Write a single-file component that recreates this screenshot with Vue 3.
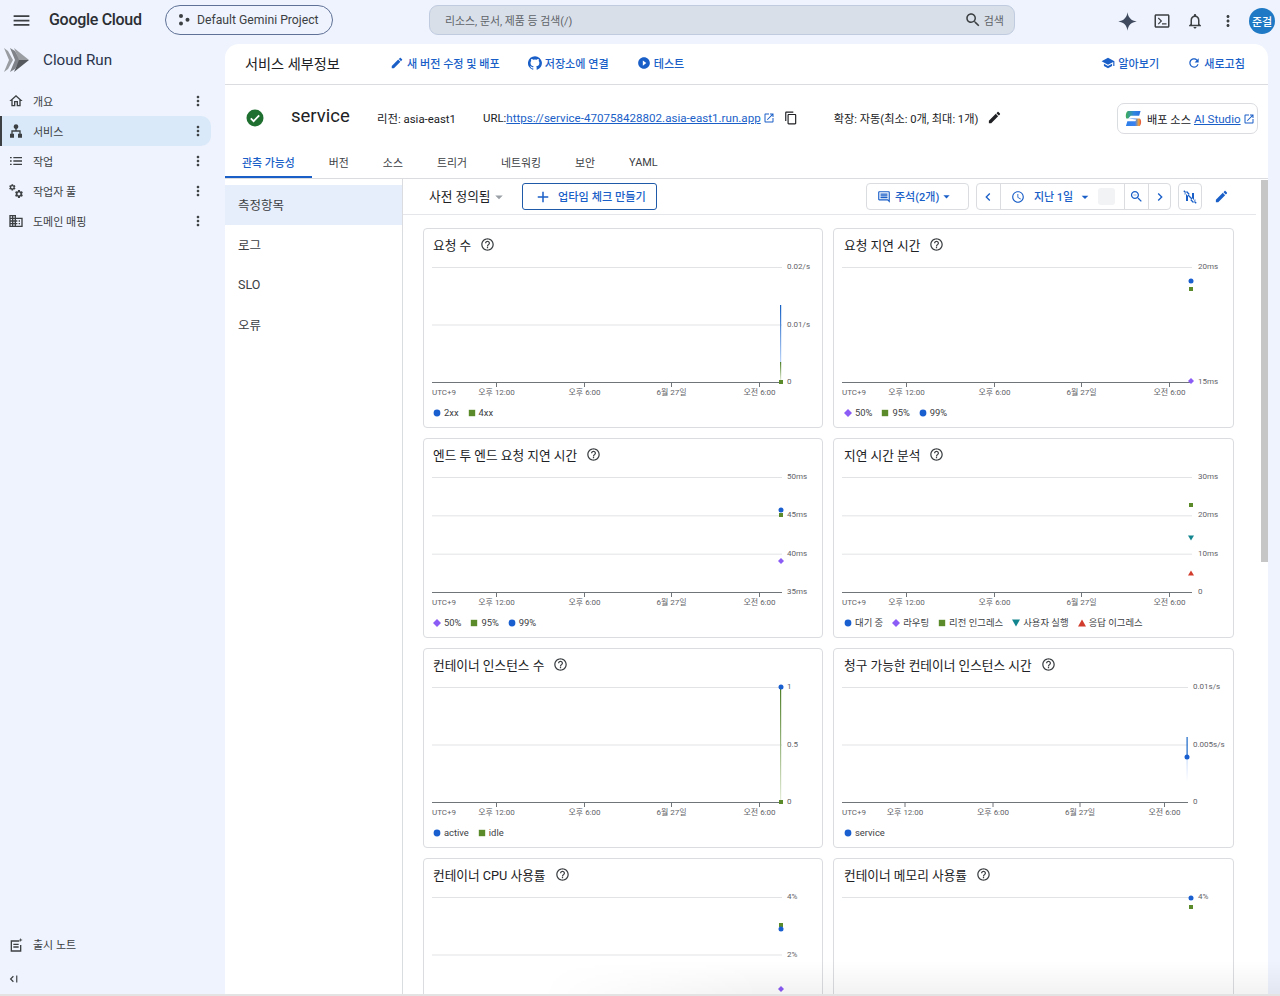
<script setup>
const P = {
  menu: 'M3 18h18v-2H3v2zm0-5h18v-2H3v2zm0-7v2h18V6H3z',
  home: 'M12 5.69l5 4.5V18h-2v-6H9v6H7v-7.81l5-4.5M12 3L2 12h3v8h6v-6h2v6h6v-8h3L12 3z',
  list: 'M3 13h2.5v-2H3v2zm0 5h2.5v-2H3v2zm0-10h2.5V6H3v2zm5 5h13v-2H8v2zm0 5h13v-2H8v2zM8 6v2h13V6H8z',
  hub: 'M12 2a3.5 3.5 0 0 1 1 6.86V11h6v5h2v6h-6v-6h2v-3H7v3h2v6H3v-6h2v-5h6V8.86A3.5 3.5 0 0 1 12 2z',
  domain: 'M12 7V3H2v18h20V7H10zM6 19H4v-2h2v2zm0-4H4v-2h2v2zm0-4H4V9h2v2zm0-4H4V5h2v2zm4 12H8v-2h2v2zm0-4H8v-2h2v2zm0-4H8V9h2v2zm0-4H8V5h2v2zm10 12h-8v-2h2v-2h-2v-2h2v-2h-2V9h8v10zm-2-8h-2v2h2v-2zm0 4h-2v2h2v-2z',
  gear: 'M19.14 12.94c.04-.3.06-.61.06-.94 0-.32-.02-.64-.07-.94l2.03-1.58c.18-.14.23-.41.12-.61l-1.92-3.32c-.12-.22-.37-.29-.59-.22l-2.39.96c-.5-.38-1.03-.7-1.62-.94l-.36-2.54c-.04-.24-.24-.41-.48-.41h-3.84c-.24 0-.43.17-.47.41l-.36 2.54c-.59.24-1.13.57-1.62.94l-2.39-.96c-.22-.08-.47 0-.59.22L2.74 8.87c-.12.21-.08.47.12.61l2.03 1.58c-.05.3-.09.63-.09.94s.02.64.07.94l-2.03 1.58c-.18.14-.23.41-.12.61l1.92 3.32c.12.22.37.29.59.22l2.39-.96c.5.38 1.03.7 1.62.94l.36 2.54c.05.24.24.41.48.41h3.84c.24 0 .44-.17.47-.41l.36-2.54c.59-.24 1.13-.56 1.62-.94l2.39.96c.22.08.47 0 .59-.22l1.92-3.32c.12-.22.07-.47-.12-.61l-2.01-1.58zM12 15.6c-1.98 0-3.6-1.62-3.6-3.6s1.62-3.6 3.6-3.6 3.6 1.62 3.6 3.6-1.62 3.6-3.6 3.6z',
  dots: 'M12 8c1.1 0 2-.9 2-2s-.9-2-2-2-2 .9-2 2 .9 2 2 2zm0 2c-1.1 0-2 .9-2 2s.9 2 2 2 2-.9 2-2-.9-2-2-2zm0 6c-1.1 0-2 .9-2 2s.9 2 2 2 2-.9 2-2-.9-2-2-2z',
  edit: 'M3 17.25V21h3.75L17.81 9.94l-3.75-3.75L3 17.25zM20.71 7.04c.39-.39.39-1.02 0-1.41l-2.34-2.34c-.39-.39-1.02-.39-1.41 0l-1.83 1.83 3.75 3.75 1.83-1.83z',
  github: 'M12 .3a12 12 0 0 0-3.8 23.4c.6.1.8-.3.8-.6v-2c-3.3.7-4-1.6-4-1.6-.6-1.4-1.4-1.8-1.4-1.8-1-.7.1-.7.1-.7 1.2.1 1.8 1.2 1.8 1.2 1 1.8 2.8 1.3 3.5 1 .1-.8.4-1.3.8-1.6-2.7-.3-5.5-1.3-5.5-5.9 0-1.3.5-2.4 1.2-3.2-.1-.3-.5-1.5.1-3.2 0 0 1-.3 3.3 1.2a11.5 11.5 0 0 1 6 0c2.3-1.5 3.3-1.2 3.3-1.2.6 1.7.2 2.9.1 3.2.8.8 1.2 1.9 1.2 3.2 0 4.6-2.8 5.6-5.5 5.9.4.4.8 1.1.8 2.2v3.3c0 .3.2.7.8.6A12 12 0 0 0 12 .3',
  play: 'M12 2C6.48 2 2 6.48 2 12s4.48 10 10 10 10-4.48 10-10S17.52 2 12 2zm-2 14.5v-9l6 4.5-6 4.5z',
  school: 'M5 13.18v4L12 21l7-3.82v-4L12 17l-7-3.82zM12 3L1 9l11 6 9-4.91V17h2V9L12 3z',
  refresh: 'M17.65 6.35C16.2 4.9 14.21 4 12 4c-4.42 0-7.99 3.58-7.99 8s3.57 8 7.99 8c3.73 0 6.84-2.55 7.73-6h-2.08c-.82 2.33-3.04 4-5.65 4-3.31 0-6-2.69-6-6s2.69-6 6-6c1.66 0 3.14.69 4.22 1.78L13 11h7V4l-2.35 2.35z',
  open: 'M19 19H5V5h7V3H5c-1.11 0-2 .9-2 2v14c0 1.1.89 2 2 2h14c1.1 0 2-.9 2-2v-7h-2v7zM14 3v2h3.59l-9.83 9.83 1.41 1.41L19 6.41V10h2V3h-7z',
  copy: 'M16 1H4c-1.1 0-2 .9-2 2v14h2V3h12V1zm3 4H8c-1.1 0-2 .9-2 2v14c0 1.1.9 2 2 2h11c1.1 0 2-.9 2-2V7c0-1.1-.9-2-2-2zm0 16H8V7h11v14z',
  search: 'M15.5 14h-.79l-.28-.27C15.41 12.59 16 11.11 16 9.5 16 5.91 13.09 3 9.5 3S3 5.91 3 9.5 5.91 16 9.5 16c1.61 0 3.09-.59 4.23-1.57l.27.28v.79l5 4.99L20.49 19l-4.99-5zm-6 0C7.01 14 5 11.99 5 9.5S7.01 5 9.5 5 14 7.01 14 9.5 11.99 14 9.5 14z',
  bell: 'M12 22c1.1 0 2-.9 2-2h-4c0 1.1.9 2 2 2zm6-6v-5c0-3.07-1.63-5.64-4.5-6.32V4c0-.83-.67-1.5-1.5-1.5s-1.5.67-1.5 1.5v.68C7.64 5.36 6 7.92 6 11v5l-2 2v1h16v-1l-2-2zm-2 1H8v-6c0-2.48 1.51-4.5 4-4.5s4 2.02 4 4.5v6z',
  star: 'M12 1.5C12.9 7.8 16.2 11.1 22.5 12 16.2 12.9 12.9 16.2 12 22.5 11.1 16.2 7.8 12.9 1.5 12 7.8 11.1 11.1 7.8 12 1.5z',
  terminal: 'M20 3H4c-1.1 0-2 .9-2 2v14c0 1.1.9 2 2 2h16c1.1 0 2-.9 2-2V5c0-1.1-.9-2-2-2zm0 16H4V5h16v14zM6.5 8.5L10 12l-3.5 3.5L7.6 16.6 12.2 12 7.6 7.4zM12 15h6v1.6h-6z',
  comment: 'M21.99 4c0-1.1-.89-2-1.99-2H4c-1.1 0-2 .9-2 2v12c0 1.1.9 2 2 2h14l4 4-.01-18zM20 4v13.17L18.83 16H4V4h16zM6 12h12v2H6zm0-3h12v2H6zm0-3h12v2H6z',
  clock: 'M11.99 2C6.47 2 2 6.48 2 12s4.47 10 9.99 10C17.52 22 22 17.52 22 12S17.52 2 11.99 2zM12 20c-4.42 0-8-3.58-8-8s3.58-8 8-8 8 3.58 8 8-3.58 8-8 8zm.5-13H11v6l5.25 3.15.75-1.23-4.5-2.67z',
  left: 'M15.41 7.41L14 6l-6 6 6 6 1.41-1.41L10.83 12z',
  right: 'M10 6L8.59 7.41 13.17 12l-4.58 4.58L10 18l6-6z',
  zoomOut: 'M15.5 14h-.79l-.28-.27C15.41 12.59 16 11.11 16 9.5 16 5.91 13.09 3 9.5 3S3 5.91 3 9.5 5.91 16 9.5 16c1.61 0 3.09-.59 4.23-1.57l.27.28v.79l5 4.99L20.49 19l-4.99-5zm-6 0C7.01 14 5 11.99 5 9.5S7.01 5 9.5 5 14 7.01 14 9.5 11.99 14 9.5 14zM7 9h5v1H7z',
  drop: 'M7 10l5 5 5-5z',
  plus: 'M19 13h-6v6h-2v-6H5v-2h6V5h2v6h6v2z',
  help: 'M11 18h2v-2h-2v2zm1-16C6.48 2 2 6.48 2 12s4.48 10 10 10 10-4.48 10-10S17.52 2 12 2zm0 18c-4.41 0-8-3.59-8-8s3.59-8 8-8 8 3.59 8 8-3.59 8-8 8zm0-14c-2.21 0-4 1.79-4 4h2c0-1.1.9-2 2-2s2 .9 2 2c0 2-3 1.75-3 5h2c0-2.25 3-2.5 3-5 0-2.21-1.79-4-4-4z',
  notes: 'M4 5h13v2H6v13h12v-8h2v10H4zM8 10h8v2H8zm0 4h8v2H8zM19 1.5l.8 2.2 2.2.8-2.2.8-.8 2.2-.8-2.2-2.2-.8 2.2-.8z',
  collapse: 'M8.5 6.5L10 8l-4 4 4 4-1.5 1.5L3 12zM14 6h2v12h-2z',
  unlink: 'M7.5 3L3 8h3v10h3V8h3zM15 6v10h-3l4.5 5 4.5-5h-3V6zM3.4 2L22 20.6 20.6 22 2 3.4z'
}

const navItems = [
  { label: '개요', icon: 'home' },
  { label: '서비스', icon: 'hub', active: true },
  { label: '작업', icon: 'list' },
  { label: '작업자 풀', icon: 'pool' },
  { label: '도메인 매핑', icon: 'domain' }
]
const tabs = ['관측 가능성', '버전', '소스', '트리거', '네트워킹', '보안', 'YAML']
const sideTabs = ['측정항목', '로그', 'SLO', '오류']

const C = { blue: '#1a5fd0', green: '#5b8a2b', purple: '#8b5cf6', teal: '#12858f', red: '#d23c2c' }

const charts = [
  { title: '요청 수', labels: ['0.02/s', '0.01/s', '0'], legend: [['circle', 'blue', '2xx'], ['square', 'green', '4xx']],
    bars: [{ x: 356, y1: 43, y2: 100, from: '#1560c4', to: '#bcd4f8' }, { x: 356, y1: 100, y2: 118, from: '#4f7f28', to: '#e3ecd6' }],
    marks: [['square', 'green', 357, 120]] },
  { title: '요청 지연 시간', labels: ['20ms', '15ms'], legend: [['diamond', 'purple', '50%'], ['square', 'green', '95%'], ['circle', 'blue', '99%']],
    marks: [['circle', 'blue', 357, 19], ['square', 'green', 357, 27], ['diamond', 'purple', 357, 119]] },
  { title: '엔드 투 엔드 요청 지연 시간', labels: ['50ms', '45ms', '40ms', '35ms'], legend: [['diamond', 'purple', '50%'], ['square', 'green', '95%'], ['circle', 'blue', '99%']],
    marks: [['circle', 'blue', 357, 38], ['square', 'green', 357, 43], ['diamond', 'purple', 357, 89]] },
  { title: '지연 시간 분석', labels: ['30ms', '20ms', '10ms', '0'], legend: [['circle', 'blue', '대기 중'], ['diamond', 'purple', '라우팅'], ['square', 'green', '리전 인그레스'], ['down', 'teal', '사용자 실행'], ['up', 'red', '응답 이그레스']],
    marks: [['square', 'green', 357, 33], ['down', 'teal', 357, 66], ['up', 'red', 357, 101]] },
  { title: '컨테이너 인스턴스 수', labels: ['1', '0.5', '0'], legend: [['circle', 'blue', 'active'], ['square', 'green', 'idle']],
    bars: [{ x: 356, y1: 6, y2: 118, from: '#4f7f28', to: '#e3ecd6' }],
    marks: [['circle', 'blue', 357, 5], ['square', 'green', 357, 120]] },
  { title: '청구 가능한 컨테이너 인스턴스 시간', labels: ['0.01s/s', '0.005s/s', '0'], wide: true, legend: [['circle', 'blue', 'service']],
    bars: [{ x: 352.5, y1: 55, y2: 75, from: '#1967c8', to: '#1967c8' }, { x: 352.5, y1: 75, y2: 100, from: '#c6dafa', to: '#ffffff' }],
    marks: [['circle', 'blue', 353, 75]] },
  { title: '컨테이너 CPU 사용률', labels: ['4%', '2%', ''], gridTo: 2, legend: [],
    marks: [['square', 'green', 357, 33], ['circle', 'blue', 357, 37], ['diamond', 'purple', 357, 97]] },
  { title: '컨테이너 메모리 사용률', labels: ['4%', '', ''], gridTo: 1, legend: [],
    marks: [['circle', 'blue', 357, 6], ['square', 'green', 357, 15]] }
]

function gridYs(c) {
  const n = c.gridTo ? 2 : c.labels.length - 1
  return c.labels.map((_, i) => 5 + (115 * i) / n).slice(0, c.gridTo || c.labels.length)
}
const tickXs = (c) => (c.wide ? [70.5, 158.5, 245.5, 330] : [72, 160, 247, 335])
const tickNames = ['오후 12:00', '오후 6:00', '6월 27일', '오전 6:00']
const gridEnd = (c) => (c.wide ? 354 : 358)
const labelX = (c, ci) => (c.wide ? 359 : ci % 2 ? 364 : 363)

function markerPoints(kind, x, y, s = 3) {
  const h = s * 0.85
  if (kind === 'diamond') return `${x},${y - s} ${x + s},${y} ${x},${y + s} ${x - s},${y}`
  if (kind === 'down') return `${x - s},${y - h} ${x + s},${y - h} ${x},${y + h}`
  return `${x - s},${y + h} ${x + s},${y + h} ${x},${y - h}`
}
</script>

<template>
  <div class="page">
    <header class="topbar">
      <svg class="ic menu" viewBox="0 0 24 24"><path :d="P.menu" /></svg>
      <span class="gc">Google Cloud</span>
      <div class="project">
        <svg class="proj-ic" viewBox="0 0 12 12"><circle cx="3" cy="2" r="2" /><circle cx="3" cy="9.5" r="2" /><circle cx="9.5" cy="5.7" r="2" /></svg>
        <span>Default Gemini Project</span>
      </div>
      <div class="searchbox">
        <span class="ph">리소스, 문서, 제품 등 검색(/)</span>
        <svg class="ic s-ic" viewBox="0 0 24 24"><path :d="P.search" /></svg>
        <span class="s-txt">검색</span>
      </div>
      <div class="top-right">
        <svg class="ic tr-star" viewBox="0 0 24 24"><path :d="P.star" /></svg>
        <svg class="ic tr" viewBox="0 0 24 24"><path :d="P.terminal" /></svg>
        <svg class="ic tr" viewBox="0 0 24 24"><path :d="P.bell" /></svg>
        <svg class="ic tr" viewBox="0 0 24 24"><path :d="P.dots" /></svg>
        <div class="avatar">준걸</div>
      </div>
    </header>

    <div class="shell">
      <aside class="sidebar">
        <div class="brand">
          <svg class="run-logo" viewBox="0 0 25 26">
            <path d="M0 1l5 12-5 12 4-3 5-9-5-9z" fill="#9a9da2" />
            <path d="M6 1l5 12-5 12 5-3 5-9-5-9z" fill="#80848a" />
            <path d="M10 1l15 12H15z" fill="#9a9da2" />
            <path d="M10 25l15-12H15z" fill="#55595e" />
          </svg>
          <span>Cloud Run</span>
        </div>
        <nav class="side-nav">
          <div v-for="n in navItems" :key="n.label" class="side-item" :class="{ on: n.active }">
            <svg v-if="n.icon === 'pool'" class="ic side-ic" viewBox="0 0 24 24">
              <path :d="P.gear" transform="translate(0.5 0.5) scale(.5)" />
              <path :d="P.gear" transform="translate(9 9) scale(.62)" />
            </svg>
            <svg v-else class="ic side-ic" viewBox="0 0 24 24"><path :d="P[n.icon]" /></svg>
            <span class="side-label">{{ n.label }}</span>
            <svg class="ic side-dots" viewBox="0 0 24 24"><path :d="P.dots" /></svg>
          </div>
        </nav>
        <div class="side-foot">
          <div class="foot-row">
            <svg class="ic side-ic" viewBox="0 0 24 24"><path :d="P.notes" /></svg>
            <span class="side-label">출시 노트</span>
          </div>
          <svg class="ic collapse" viewBox="0 0 24 24"><path :d="P.collapse" /></svg>
        </div>
      </aside>

      <main class="main">
        <div class="head">
          <h1>서비스 세부정보</h1>
          <a class="act first"><svg class="ic" viewBox="0 0 24 24"><path :d="P.edit" /></svg>새 버전 수정 및 배포</a>
          <a class="act"><svg class="ic" viewBox="0 0 24 24"><path :d="P.github" /></svg>저장소에 연결</a>
          <a class="act"><svg class="ic" viewBox="0 0 24 24"><path :d="P.play" /></svg>테스트</a>
          <a class="act learn"><svg class="ic" viewBox="0 0 24 24"><path :d="P.school" /></svg>알아보기</a>
          <a class="act"><svg class="ic" viewBox="0 0 24 24"><path :d="P.refresh" /></svg>새로고침</a>
        </div>

        <div class="info">
          <svg class="ok" viewBox="0 0 18 18"><circle cx="9" cy="9" r="8.5" fill="#1e6f30" /><path d="M4.8 9.4l2.8 2.8 5.6-5.8" fill="none" stroke="#fff" stroke-width="1.8" /></svg>
          <span class="svc">service</span>
          <span class="meta region">리전: asia-east1</span>
          <span class="meta url">URL:<a>https://service-470758428802.asia-east1.run.app</a></span>
          <svg class="ic ext" viewBox="0 0 24 24"><path :d="P.open" /></svg>
          <svg class="ic copy" viewBox="0 0 24 24"><path :d="P.copy" /></svg>
          <span class="meta scale">확장: 자동(최소: 0개, 최대: 1개)</span>
          <svg class="ic pen" viewBox="0 0 24 24"><path :d="P.edit" /></svg>
          <div class="source">
            <svg class="studio" viewBox="0 0 18 17">
              <defs>
                <linearGradient id="sa" x1="0" x2="1"><stop offset="0" stop-color="#3fae55" /><stop offset=".55" stop-color="#2f86e0" /><stop offset="1" stop-color="#2b6fe3" /></linearGradient>
                <linearGradient id="sb" x1="0" x2="1"><stop offset="0" stop-color="#2b7de8" /><stop offset=".6" stop-color="#3b82f0" /><stop offset=".85" stop-color="#f2a33a" /><stop offset="1" stop-color="#e0483c" /></linearGradient>
              </defs>
              <path d="M3 .5h13.5L15 5.5H6L3.5 8.5H1.5C.5 7 .5 2 3 .5z" fill="url(#sa)" />
              <path d="M3.5 8.5h12c2 1 2.2 6 0 8H1l1.5-5H11l1-2z" fill="url(#sb)" />
            </svg>
            <span class="meta">배포 소스</span>
            <a class="studio-link">AI Studio</a>
            <svg class="ic ext" viewBox="0 0 24 24"><path :d="P.open" /></svg>
          </div>
        </div>

        <div class="tabs">
          <span v-for="(t, i) in tabs" :key="t" class="tab" :class="{ on: i === 0 }">{{ t }}</span>
        </div>

        <div class="body">
          <div class="left">
            <div v-for="(s, i) in sideTabs" :key="s" class="left-item" :class="{ on: i === 0 }">{{ s }}</div>
          </div>
          <div class="content">
            <div class="tools">
              <span class="preset">사전 정의됨</span>
              <svg class="ic preset-arrow" viewBox="0 0 24 24"><path :d="P.drop" /></svg>
              <button class="uptime"><svg class="ic" viewBox="0 0 24 24"><path :d="P.plus" /></svg><span>업타임 체크 만들기</span></button>
              <div class="note"><svg class="ic" viewBox="0 0 24 24"><path :d="P.comment" /></svg><span>주석(2개)</span><svg class="ic arrow" viewBox="0 0 24 24"><path :d="P.drop" /></svg></div>
              <div class="time">
                <div class="cell side"><svg class="ic" viewBox="0 0 24 24"><path :d="P.left" /></svg></div>
                <div class="cell range">
                  <svg class="ic clock" viewBox="0 0 24 24"><path :d="P.clock" /></svg>
                  <span>지난 1일</span>
                  <svg class="ic arrow" viewBox="0 0 24 24"><path :d="P.drop" /></svg>
                  <i class="swatch"></i>
                </div>
                <div class="cell side"><svg class="ic zoom" viewBox="0 0 24 24"><path :d="P.zoomOut" /></svg></div>
                <div class="cell side last"><svg class="ic" viewBox="0 0 24 24"><path :d="P.right" /></svg></div>
              </div>
              <div class="unlink"><svg class="ic" viewBox="0 0 24 24"><path :d="P.unlink" /></svg></div>
              <svg class="ic tool-pen" viewBox="0 0 24 24"><path :d="P.edit" /></svg>
            </div>

            <div class="grid">
              <section v-for="(c, ci) in charts" :key="c.title" class="card">
                <div class="card-title">
                  <span>{{ c.title }}</span>
                  <svg class="ic help" viewBox="0 0 24 24"><path :d="P.help" /></svg>
                </div>
                <svg class="plot" viewBox="0 0 398 140" width="398" height="140">
                  <defs>
                    <linearGradient v-for="(b, bi) in c.bars || []" :key="bi" :id="`g${ci}-${bi}`" x1="0" x2="0" y1="0" y2="1">
                      <stop offset="0" :stop-color="b.from" /><stop offset="1" :stop-color="b.to" />
                    </linearGradient>
                  </defs>
                  <template v-for="(y, i) in gridYs(c)" :key="i">
                    <line x1="8" :x2="gridEnd(c)" :y1="y + .5" :y2="y + .5" class="gridline" />
                    <text :x="labelX(c, ci)" :y="y + 2" class="ylab">{{ c.labels[i] }}</text>
                  </template>
                  <template v-if="!c.gridTo">
                    <line x1="8" :x2="gridEnd(c)" y1="120.5" y2="120.5" class="axis" />
                    <line v-for="x in tickXs(c)" :key="x" :x1="x + .5" :x2="x + .5" y1="120" y2="125" class="axis" />
                    <text x="8" y="132.5" class="xlab">UTC+9</text>
                    <text v-for="(n, i) in tickNames" :key="n" :x="tickXs(c)[i] + .5" y="132.5" text-anchor="middle" class="xlab">{{ n }}</text>
                  </template>
                  <rect v-for="(b, bi) in c.bars || []" :key="'b' + bi" :x="b.x" :y="b.y1" width="1.2" :height="b.y2 - b.y1" :fill="`url(#g${ci}-${bi})`" />
                  <template v-for="(m, mi) in c.marks" :key="'m' + mi">
                    <circle v-if="m[0] === 'circle'" :cx="m[2]" :cy="m[3]" r="2.5" :fill="C[m[1]]" />
                    <rect v-else-if="m[0] === 'square'" :x="m[2] - 2" :y="m[3] - 2" width="4" height="4" :fill="C[m[1]]" />
                    <polygon v-else :points="markerPoints(m[0], m[2], m[3])" :fill="C[m[1]]" />
                  </template>
                </svg>
                <div class="legend">
                  <span v-for="l in c.legend" :key="l[2]" class="lg">
                    <svg class="lg-mark" viewBox="0 0 8 8">
                      <circle v-if="l[0] === 'circle'" cx="4" cy="4" r="3.4" :fill="C[l[1]]" />
                      <rect v-else-if="l[0] === 'square'" x=".8" y=".8" width="6.4" height="6.4" :fill="C[l[1]]" />
                      <polygon v-else :points="markerPoints(l[0], 4, 4, 4)" :fill="C[l[1]]" />
                    </svg>
                    {{ l[2] }}
                  </span>
                </div>
              </section>
            </div>
            <div class="thumb"></div>
          </div>
        </div>
      </main>
    </div>
    <div class="fade"></div>
    <div class="edge"></div>
  </div>
</template>

<style>
html, body { margin: 0; padding: 0; background: #eef3fd; }
</style>

<style scoped>
.page {
  position: relative;
  width: 1280px;
  height: 996px;
  overflow: hidden;
  background: #eef3fd;
  font-family: Roboto, "Noto Sans CJK KR", sans-serif;
  color: #202124;
  display: flex;
  flex-direction: column;
}
.ic { fill: currentColor; flex: none; display: block; }

.topbar { height: 44px; display: flex; align-items: center; flex: none; }
.menu { width: 21px; height: 21px; margin-left: 11px; margin-top: -4px; color: #3c4043; }
.gc { margin-left: 17px; width: 116px; font-size: 16px; font-weight: 500; letter-spacing: -.3px; color: #2b2e33; margin-top: -5px; white-space: nowrap; }
.project {
  width: 168px; height: 30px; box-sizing: border-box; margin-top: -4px;
  border: 1px solid #5f7196; border-radius: 15px;
  display: flex; align-items: center; padding-left: 12px; gap: 7px;
  font-size: 12.2px; color: #3c4043; white-space: nowrap;
}
.project span { margin-bottom: 1px; }
.proj-ic { width: 12px; height: 12px; fill: #3c4043; flex: none; }
.searchbox {
  margin-left: 96px; margin-top: -4px; width: 586px; height: 30px; box-sizing: border-box;
  background: #d8dfe8; border: 1px solid #c0cbe0; border-radius: 9px;
  display: flex; align-items: center; padding-left: 15px; font-size: 10.9px; color: #5f6368;
}
.ph { flex: 1; margin-bottom: 1px; }
.s-ic { width: 18px; height: 18px; color: #3c4043; }
.s-txt { margin-left: 2px; margin-right: 10px; font-size: 11px; margin-bottom: 1px; }
.top-right { display: flex; align-items: center; margin-left: 102px; margin-top: -2px; }
.tr-star { width: 21px; height: 21px; color: #3f4a5e; margin-right: 15px; }
.tr { width: 18px; height: 18px; color: #3c4043; margin-right: 15px; }
.avatar {
  width: 26px; height: 26px; border-radius: 50%; background: #1f79c4; color: #fff;
  font-size: 11px; font-weight: 500; display: flex; align-items: center; justify-content: center;
  margin-left: -3px; white-space: nowrap;
}

.shell { flex: 1; display: flex; min-height: 0; }
.sidebar { width: 225px; flex: none; display: flex; flex-direction: column; }
.brand { height: 32px; display: flex; align-items: center; font-size: 15.2px; color: #28324a; padding-left: 4px; }
.brand span { margin-left: 14px; }
.run-logo { width: 25px; height: 26px; flex: none; }
.side-nav { margin-top: 10px; }
.side-item {
  height: 30px; width: 211px; box-sizing: border-box; display: flex; align-items: center;
  padding-left: 6px; border-radius: 0 10px 10px 0; border-left: 2px solid transparent;
  font-size: 11px; color: #3c4043;
}
.side-item.on { background: #d9e9f9; border-left-color: #3c4043; }
.side-ic { width: 16px; height: 16px; color: #3c4043; }
.side-label { margin-left: 9px; white-space: nowrap; margin-bottom: 1px; }
.side-dots { width: 16px; height: 16px; margin-left: auto; margin-right: 5px; color: #3c4043; }
.side-foot { margin-top: auto; padding-bottom: 10px; font-size: 11px; color: #3c4043; }
.foot-row { display: flex; align-items: center; height: 20px; padding-left: 8px; }
.foot-row .side-label { margin-bottom: 3px; }
.collapse { width: 14px; height: 14px; margin: 17px 0 0 8px; color: #3c4043; }

.main {
  width: 1043px; flex: none; background: #fff; border-radius: 14px 14px 0 0;
  display: flex; flex-direction: column; min-height: 0;
}
.head {
  height: 41px; flex: none; box-sizing: border-box; border-bottom: 1px solid #dadce0; padding-bottom: 2px;
  display: flex; align-items: center; padding-left: 20px;
}
.head h1 { margin: 0; font-size: 14.2px; font-weight: 400; color: #202124; width: 145px; white-space: nowrap; }
.act { display: flex; align-items: center; gap: 3px; font-size: 11.1px; font-weight: 500; color: #1a5fc8; margin-right: 28px; white-space: nowrap; }
.act .ic { width: 14px; height: 14px; }
.act.learn { margin-left: auto; }
.head .act:last-child { margin-right: 23px; }

.info { height: 65px; flex: none; display: flex; align-items: center; position: relative; }
.ok { width: 18px; height: 18px; margin-left: 21px; flex: none; }
.svc { margin-left: 27px; width: 86px; font-size: 18.5px; font-weight: 400; color: #202124; white-space: nowrap; margin-top: -4px; }
.meta { font-size: 11.2px; color: #202124; white-space: nowrap; }
.region { width: 106px; font-size: 11.4px; }
.url { font-size: 11.4px; }
.url a { color: #1a5fc8; text-decoration: underline; font-size: 11.6px; }
.ext { width: 12px; height: 12px; color: #1a5fc8; margin-left: 2px; }
.copy { width: 14px; height: 14px; margin-left: 9px; color: #202124; }
.scale { margin-left: 36px; }
.pen { width: 15px; height: 15px; margin-left: 9px; color: #202124; }
.source {
  margin-left: auto; margin-right: 10px; width: 141px; height: 31px; box-sizing: border-box; margin-top: 2px;
  border: 1px solid #dadce0; border-radius: 7px; display: flex; align-items: center; padding-left: 7px;
}
.studio { width: 17px; height: 17px; flex: none; margin-right: 5px; }
.studio-link { margin-left: 3px; font-size: 11.6px; color: #1a5fc8; text-decoration: underline; white-space: nowrap; }

.tabs { height: 29px; flex: none; box-sizing: border-box; border-bottom: 1px solid #dadce0; display: flex; }
.tab { padding: 0 17px 4px; height: 28px; box-sizing: border-box; font-size: 10.9px; color: #3c4043; display: flex; align-items: center; white-space: nowrap; }
.tab.on { color: #1a5fc8; font-weight: 500; border-bottom: 2px solid #1a5fc8; padding-bottom: 2px; }

.body { flex: 1; display: flex; min-height: 0; }
.left { width: 178px; flex: none; box-sizing: border-box; border-right: 1px solid #dadce0; padding-top: 6px; }
.left-item { height: 40px; box-sizing: border-box; padding-bottom: 2px; display: flex; align-items: center; padding-left: 13px; font-size: 12.5px; color: #3c4043; }
.left-item.on { background: #e6edfb; }

.content { flex: 1; position: relative; min-width: 0; overflow: hidden; }
.tools {
  height: 36px; width: 853px; box-sizing: border-box; border-bottom: 1px solid #e4e6e9;
  display: flex; align-items: center; padding-left: 26px;
}
.preset { font-size: 12.7px; color: #202124; white-space: nowrap; width: 65px; margin-bottom: 2px; }
.preset-arrow { width: 18px; height: 18px; color: #9aa0a6; margin-left: -4px; }
.uptime {
  margin-left: 14px; width: 135px; height: 27px; box-sizing: border-box;
  border: 1px solid #1f5aa8; border-radius: 3px; background: #fff; color: #1a5fc8;
  display: flex; align-items: center; padding: 0 0 0 11px; gap: 6px;
  font: 500 11.2px Roboto, "Noto Sans CJK KR", sans-serif; white-space: nowrap;
}
.uptime span { margin-bottom: 2px; }
.uptime .ic { width: 18px; height: 18px; }
.note {
  margin-left: 209px; width: 103px; height: 27px; box-sizing: border-box;
  border: 1px solid #dadce0; border-radius: 4px; display: flex; align-items: center;
  padding-left: 10px; gap: 4px; color: #1a5fc8; font-size: 11px; font-weight: 500; white-space: nowrap;
}
.note span { margin-bottom: 2px; margin-right: -4px; }
.note .ic { width: 14px; height: 14px; }
.note .arrow { width: 15px; height: 15px; margin-left: 0; }
.time {
  margin-left: 7px; width: 195px; height: 27px; box-sizing: border-box;
  border: 1px solid #dadce0; border-radius: 4px; display: flex; color: #1a5fc8;
}
.cell { display: flex; align-items: center; justify-content: center; border-right: 1px solid #dadce0; box-sizing: border-box; }
.cell.side { width: 24px; }
.cell.side.last { border-right: 0; width: 21px; }
.cell .ic { width: 16px; height: 16px; }
.cell .zoom { width: 15px; height: 15px; }
.cell.range { width: 125px; justify-content: flex-start; padding-left: 10px; font-size: 11px; font-weight: 500; white-space: nowrap; }
.cell .clock { width: 14px; height: 14px; }
.cell.range > span { margin-left: 9px; width: 43px; margin-bottom: 2px; }
.swatch { width: 17px; height: 17px; background: #f1f3f4; border-radius: 3px; margin-left: 5px; }
.unlink {
  margin-left: 7px; width: 24px; height: 27px; box-sizing: border-box; border: 1px solid #dadce0;
  border-radius: 4px; display: flex; align-items: center; justify-content: center; color: #1a5fc8;
}
.unlink .ic { width: 16px; height: 16px; }
.tool-pen { width: 15px; height: 15px; margin-left: 12px; color: #1a5fc8; }

.grid {
  display: grid; grid-template-columns: 400px 401px; grid-auto-rows: 200px; gap: 10px;
  padding: 13px 0 0 20px;
}
.card { box-sizing: border-box; border: 1px solid #dadce0; border-radius: 4px; display: flex; flex-direction: column; overflow: hidden; }
.card-title {
  height: 31px; margin-bottom: 2px; flex: none; display: flex; align-items: center; padding-left: 9px;
  font-size: 12.7px; color: #202124; white-space: nowrap; gap: 9px;
}
.card-title span { margin-bottom: 1px; }
.card:nth-child(even) .card-title { padding-left: 10px; }
.help { width: 15px; height: 15px; color: #3c4043; }
.plot { flex: none; display: block; overflow: visible; }
.gridline { stroke: #e2e3e5; stroke-width: 1; }
.axis { stroke: #70757a; stroke-width: 1; }
.ylab, .xlab { font-size: 8px; fill: #5f6368; font-family: Roboto, "Noto Sans CJK KR", sans-serif; }
.legend { display: flex; gap: 9px; padding: 6px 0 0 9px; font-size: 9.4px; line-height: 10px; color: #3c4043; }
.card:nth-child(even) .legend { padding-left: 10px; }
.lg { display: flex; align-items: center; gap: 3px; white-space: nowrap; }
.lg-mark { width: 8px; height: 8px; flex: none; }
.thumb { position: absolute; right: 0; top: 1px; width: 7px; height: 382px; background: #c6c6c6; }
.fade {
  position: absolute; left: 540px; right: 0; bottom: 1px; height: 34px; pointer-events: none;
  background: linear-gradient(to top, rgba(0,0,0,.05), rgba(0,0,0,0));
  -webkit-mask-image: linear-gradient(to right, transparent, #000 30%);
  mask-image: linear-gradient(to right, transparent, #000 30%);
}
.edge { position: absolute; left: 0; right: 0; bottom: 0; height: 2px; background: #e3e3e3; }
</style>
